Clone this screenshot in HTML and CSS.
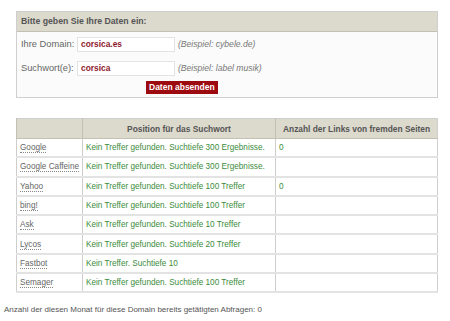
FILE: index.html
```html
<!DOCTYPE html>
<html lang="de">
<head>
  <meta charset="UTF-8" />
  <title>Ranking-Abfrage</title>
  <link rel="stylesheet" href="styles.css">
</head>
<body>

  <!-- Eingabeformular -->
  <div class="formbox">
    <h3>Bitte geben Sie Ihre Daten ein:</h3>
    <div class="zeile">
      <label>Ihre Domain:</label>
      <input type="text" value="corsica.es">
      <span class="hinweis">(Beispiel: cybele.de)</span>
    </div>
    <div class="zeile">
      <label>Suchwort(e):</label>
      <input type="text" value="corsica">
      <span class="hinweis">(Beispiel: label musik)</span>
    </div>
    <div class="zeile-button">
      <button class="absenden">Daten absenden</button>
    </div>
  </div>

  <!-- Ergebnisse -->
  <table class="ergebnis">
    <tr>
      <th class="sp1"></th>
      <th class="sp2">Position für das Suchwort</th>
      <th class="sp3">Anzahl der Links von fremden Seiten</th>
    </tr>
    <tr><td><a href="#">Google</a></td><td class="treffer">Kein Treffer gefunden. Suchtiefe 300 Ergebnisse.</td><td>0</td></tr>
    <tr><td><a href="#">Google Caffeine</a></td><td class="treffer">Kein Treffer gefunden. Suchtiefe 300 Ergebnisse.</td><td></td></tr>
    <tr><td><a href="#">Yahoo</a></td><td class="treffer">Kein Treffer gefunden. Suchtiefe 100 Treffer</td><td>0</td></tr>
    <tr><td><a href="#">bing!</a></td><td class="treffer">Kein Treffer gefunden. Suchtiefe 100 Treffer</td><td></td></tr>
    <tr><td><a href="#">Ask</a></td><td class="treffer">Kein Treffer gefunden. Suchtiefe 10 Treffer</td><td></td></tr>
    <tr><td><a href="#">Lycos</a></td><td class="treffer">Kein Treffer gefunden. Suchtiefe 20 Treffer</td><td></td></tr>
    <tr><td><a href="#">Fastbot</a></td><td class="treffer">Kein Treffer. Suchtiefe 10</td><td></td></tr>
    <tr><td><a href="#">Semager</a></td><td class="treffer">Kein Treffer gefunden. Suchtiefe 100 Treffer</td><td></td></tr>
  </table>

  <p class="fuss">Anzahl der diesen Monat für diese Domain bereits getätigten Abfragen: 0</p>

</body>
</html>
```

FILE: styles.css
```css
body {
  margin: 0;
  padding: 0 4px;
  font-family: "Liberation Sans", Arial, sans-serif;
  font-size: 8.2px;
  color: #555;
  background-color: #fff;
}

.formbox {
  width: 420px;
  margin: 11px 0 0 12px;
  border: 1px solid #cfcfcf;
  background-color: #fbfbfb;
  padding-bottom: 3px;
}

.formbox h3 {
  margin: 0;
  height: 19px;
  line-height: 19px;
  padding-left: 4px;
  font-size: 8.7px;
  font-weight: bold;
  color: #555;
  background-color: #dcd9cd;
  border-bottom: 1px solid #c4c1b4;
}

.zeile {
  display: flex;
  align-items: center;
  height: 24px;
  padding-left: 4px;
}

.zeile label {
  width: 56px;
  white-space: nowrap;
  font-size: 9.3px;
  color: #666;
}

.zeile input {
  width: 98px;
  height: 15px;
  box-sizing: border-box;
  border: 1px solid #e3e3e3;
  background-color: #fff;
  padding: 0 3px;
  font-family: "Liberation Sans", Arial, sans-serif;
  font-size: 8.4px;
  font-weight: bold;
  color: #8e1b2c;
}

.hinweis {
  margin-left: 3px;
  font-size: 8.6px;
  font-style: italic;
  color: #777;
}

.zeile-button {
  padding: 1px 0 0 129px;
}

.absenden {
  display: block;
  height: 13px;
  padding: 0 3px;
  border: none;
  background-color: #9c0a10;
  color: #fff;
  font-family: "Liberation Sans", Arial, sans-serif;
  font-size: 8.5px;
  font-weight: bold;
  line-height: 13px;
}

.ergebnis {
  width: 422px;
  margin: 20px 0 0 12px;
  border-collapse: collapse;
  border: 1px solid #cfcfcf;
}

.ergebnis th {
  height: 19px;
  padding: 0;
  background-color: #dcd9cd;
  font-size: 8.4px;
  font-weight: bold;
  color: #555;
  border-left: 1px solid #c4c1b4;
  border-bottom: 1px solid #c4c1b4;
}

.sp1 { width: 65px; }
.sp2 { width: 192px; }

.ergebnis td {
  height: 17.3px;
  padding: 0 0 0 3px;
  white-space: nowrap;
  border-left: 1px solid #cdcdcd;
  border-bottom: 2px solid #e3e3e3;
  color: #3c8c3c;
}

.ergebnis a {
  color: #666;
  text-decoration: none;
  border-bottom: 1px dotted #888;
}

.treffer {
  color: #2f8f2f;
}

.fuss {
  margin: 12px 0 0 0;
  font-size: 8px;
  color: #555;
}
```
